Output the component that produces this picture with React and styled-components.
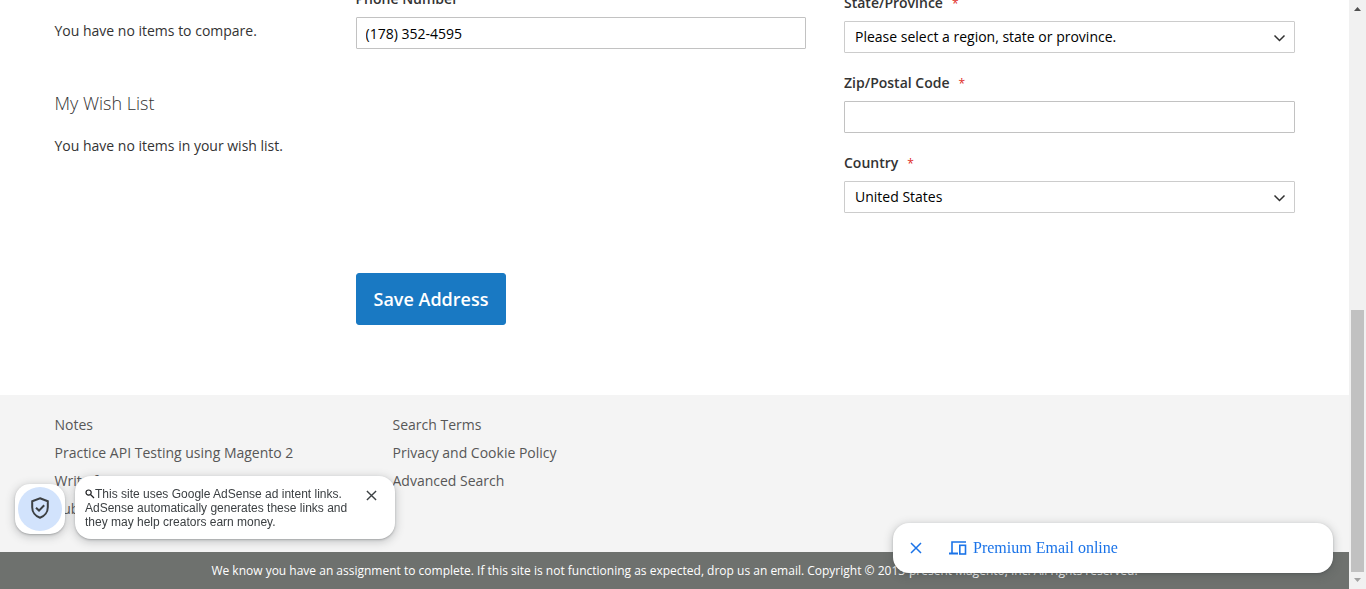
import React from 'react';
import styled, { createGlobalStyle } from 'styled-components';

const GlobalStyle = createGlobalStyle`
  *, *::before, *::after { box-sizing: border-box; }
  body {
    margin: 0;
    background: #fff;
    color: #333;
    font: 400 14px/20px "Open Sans", "Noto Sans", sans-serif;
  }
`;

const Window = styled.div`
  display: flex;
  height: 100vh;
  overflow: hidden;
`;

/* The page rests at the end of its scroll range, so it is anchored to the bottom. */
const Page = styled.div`
  flex: 1;
  min-width: 0;
  display: flex;
  flex-direction: column;
  justify-content: flex-end;
  overflow: hidden;
`;

const Container = styled.div`
  width: 100%;
  max-width: 1280px;
  margin: 0 auto;
  padding: 0 20px;
`;

const Main = styled(Container).attrs({ as: 'main' })`
  display: flex;
  flex-shrink: 0;
  padding-bottom: 70px;
`;

const Sidebar = styled.aside`
  flex: 0 0 301px;
  padding-top: 32px;
`;

const SideBlock = styled.section`
  margin-bottom: 50px;
`;

const SideTitle = styled.h2`
  margin: 0 0 20px;
  font-size: 18px;
  font-weight: 300;
  line-height: 25px;
`;

const SideText = styled.p`
  margin: 0;
`;

const Form = styled.form`
  flex: 1;
  min-width: 0;
`;

const Columns = styled.div`
  display: grid;
  grid-template-columns: 1fr 1fr;
  column-gap: 38px;
  margin-bottom: 60px;
`;

const FieldColumn = styled.div`
  display: flex;
  flex-direction: column;
  gap: 20px;
  padding-top: ${(p) => (p.$offset ? '4px' : '0')};
`;

const FieldBox = styled.div`
  display: flex;
  flex-direction: column;
  gap: 8px;
`;

const Label = styled.label`
  font-weight: 600;
`;

const Required = styled.span`
  margin-left: 9px;
  color: #e02b27;
  font-size: 12px;
  font-weight: 400;
  line-height: 12px;
`;

const TextInput = styled.input`
  width: 100%;
  height: 32px;
  padding: 0 9px;
  border: 1px solid #c2c2c2;
  border-radius: 1px;
  background: #fff;
  color: #000;
  font: inherit;
`;

const SelectWrap = styled.div`
  position: relative;
  display: flex;

  svg {
    position: absolute;
    right: 9px;
    top: 13px;
    pointer-events: none;
  }
`;

const SelectInput = styled.select`
  width: 100%;
  height: 32px;
  padding: 0 25px 1px 10px;
  border: 1px solid #ccc;
  border-radius: 1px;
  background: #fff;
  color: #000;
  font: inherit;
  appearance: none;
`;

const SaveButton = styled.button`
  height: 52px;
  padding: 0 17px;
  border: 1px solid #1979c3;
  border-radius: 3px;
  background: #1979c3;
  color: #fff;
  font: 600 18px/22px "Open Sans", "Noto Sans", sans-serif;
  display: block;
`;

const Footer = styled.footer`
  flex-shrink: 0;
  background: #f4f4f4;
`;

const FooterLinks = styled(Container)`
  display: flex;
  padding-top: 20px;
  padding-bottom: 33px;
`;

const LinkList = styled.ul`
  flex: 0 0 338px;
  display: flex;
  flex-direction: column;
  gap: 8px;
  margin: 0;
  padding: 0;
  list-style: none;
`;

const FooterLink = styled.a`
  color: #575757;
  text-decoration: none;
`;

const Copyright = styled.small`
  display: block;
  padding: 10px;
  background: #6e716e;
  color: #fff;
  font-size: 12px;
  line-height: 17px;
  font-weight: 400;
  text-align: center;
`;

const Scrollbar = styled.div`
  flex: 0 0 17px;
  display: flex;
  flex-direction: column;
  align-items: center;
  background: #f1f1f1;
`;

const ScrollArrow = styled.svg`
  flex: 0 0 17px;
  width: 17px;
  height: 17px;
`;

const ScrollSpace = styled.div`
  flex: 293;
`;

const ScrollThumb = styled.div`
  flex: 262;
  width: 13px;
  background: #c1c1c1;
`;

const Floating = styled.div`
  position: fixed;
  background: #fff;
  border-radius: 20px;
  box-shadow: 0 1px 2px rgba(60, 64, 67, 0.3), 0 2px 8px 1px rgba(60, 64, 67, 0.25);
`;

const Badge = styled(Floating).attrs({ as: 'button', type: 'button' })`
  left: 15px;
  bottom: 55px;
  width: 50px;
  height: 50px;
  padding: 3px;
  border: 0;
  border-radius: 15px;
`;

const BadgeDisc = styled.span`
  display: grid;
  place-items: center;
  width: 44px;
  height: 44px;
  padding-bottom: 2px;
  border-radius: 50%;
  background: #d2e3fc;
`;

const Notice = styled(Floating)`
  left: 75px;
  bottom: 50px;
  width: 320px;
  display: flex;
  align-items: flex-start;
  justify-content: space-between;
  padding: 11px 18px 10px 10px;
  border-radius: 16px;
`;

const NoticeText = styled.p`
  margin: 0;
  width: 272px;
  color: #3c4043;
  font: 400 12px/14px "Liberation Sans", sans-serif;

  svg { vertical-align: -1px; }
`;

const IconButton = styled.button`
  display: grid;
  place-items: center;
  width: 12px;
  height: 16px;
  padding: 0;
  border: 0;
  background: none;
`;

const Promo = styled(Floating)`
  right: 33px;
  bottom: 16px;
  width: 440px;
  height: 50px;
  display: flex;
  align-items: center;
  gap: 27px;
  padding: 0 17px;
  border-radius: 16px;
`;

const PromoLink = styled.a`
  display: flex;
  align-items: center;
  gap: 6px;
  color: #1a73e8;
  font: 400 16px/20px "Liberation Serif", serif;
  text-decoration: none;
`;

const Chevron = () => (
  <svg width="13" height="9" viewBox="0 0 13 9" fill="none" stroke="#303030" strokeWidth="1.5" aria-hidden="true">
    <path d="M1.5 1.5 6.5 6.5 11.5 1.5" />
  </svg>
);

const Cross = ({ size, color }) => (
  <svg width={size} height={size} viewBox="0 0 12 12" stroke={color} strokeWidth="1.5" aria-hidden="true">
    <path d="M1 1 11 11M11 1 1 11" />
  </svg>
);

const Field = ({ id, label, required, children }) => (
  <FieldBox>
    <Label htmlFor={id}>
      {label}
      {required && <Required>*</Required>}
    </Label>
    {children}
  </FieldBox>
);

const Select = ({ id, value }) => (
  <SelectWrap>
    <SelectInput id={id} defaultValue={value}>
      <option>{value}</option>
    </SelectInput>
    <Chevron />
  </SelectWrap>
);

const Links = ({ items }) => (
  <LinkList>
    {items.map((item) => (
      <li key={item}><FooterLink href="#">{item}</FooterLink></li>
    ))}
  </LinkList>
);

export default function App() {
  return (
    <Window>
      <GlobalStyle />
      <Page>
        <Main>
          <Sidebar>
            <SideBlock>
              <SideText>You have no items to compare.</SideText>
            </SideBlock>
            <SideBlock>
              <SideTitle>My Wish List</SideTitle>
              <SideText>You have no items in your wish list.</SideText>
            </SideBlock>
          </Sidebar>
          <Form onSubmit={(e) => e.preventDefault()}>
            <Columns>
              <FieldColumn>
                <Field id="phone" label="Phone Number">
                  <TextInput id="phone" type="tel" defaultValue="(178) 352-4595" />
                </Field>
              </FieldColumn>
              <FieldColumn $offset>
                <Field id="region" label="State/Province" required>
                  <Select id="region" value="Please select a region, state or province." />
                </Field>
                <Field id="zip" label="Zip/Postal Code" required>
                  <TextInput id="zip" type="text" />
                </Field>
                <Field id="country" label="Country" required>
                  <Select id="country" value="United States" />
                </Field>
              </FieldColumn>
            </Columns>
            <SaveButton type="submit">Save Address</SaveButton>
          </Form>
        </Main>
        <Footer>
          <FooterLinks>
            <Links items={['Notes', 'Practice API Testing using Magento 2', 'Write for us', 'Subscribe']} />
            <Links items={['Search Terms', 'Privacy and Cookie Policy', 'Advanced Search']} />
          </FooterLinks>
          <Copyright>
            We know you have an assignment to complete. If this site is not functioning as expected, drop us an email. Copyright © 2013-present Magento, Inc. All rights reserved.
          </Copyright>
        </Footer>
      </Page>

      <Scrollbar aria-hidden="true">
        <ScrollArrow viewBox="0 0 17 17"><path d="M5 11 8.500 7 12 11Z" fill="#505050" /></ScrollArrow>
        <ScrollSpace />
        <ScrollThumb />
        <ScrollArrow viewBox="0 0 17 17"><path d="M5 6 8.500 10 12 6Z" fill="#a3a3a3" /></ScrollArrow>
      </Scrollbar>

      <Badge aria-label="Privacy">
        <BadgeDisc>
          <svg width="18" height="22" viewBox="0 0 18 22" fill="none" stroke="#3c4043" strokeWidth="2" aria-hidden="true">
            <path d="M9 1.200 16.800 4.200V10.200C16.800 15 13.600 19.200 9 20.800 4.400 19.200 1.200 15 1.200 10.200V4.200Z" />
            <path d="M5 10.800 8 13.600 13.200 8.200" />
          </svg>
        </BadgeDisc>
      </Badge>

      <Notice role="status">
        <NoticeText>
          <svg width="10" height="10" viewBox="0 0 10 10" fill="none" stroke="#202124" strokeWidth="1.200" aria-hidden="true">
            <circle cx="3.600" cy="3.600" r="2.600" />
            <path d="M5.500 5.500 9 9" />
          </svg>
          This site uses Google AdSense ad intent links. AdSense automatically generates these links and they may help creators earn money.
        </NoticeText>
        <IconButton type="button" aria-label="Close notice"><Cross size={11} color="#3c4043" /></IconButton>
      </Notice>

      <Promo>
        <IconButton type="button" aria-label="Close ad"><Cross size={12} color="#1a73e8" /></IconButton>
        <PromoLink href="#">
          <svg width="18" height="14" viewBox="0 0 18 14" fill="none" stroke="#1a73e8" aria-hidden="true">
            <path d="M17 1H3V12" strokeWidth="1.600" />
            <path d="M0 12.500H9" strokeWidth="2" />
            <rect x="10.800" y="4.300" width="5.700" height="8.700" strokeWidth="1.600" />
          </svg>
          Premium Email online
        </PromoLink>
      </Promo>
    </Window>
  );
}
